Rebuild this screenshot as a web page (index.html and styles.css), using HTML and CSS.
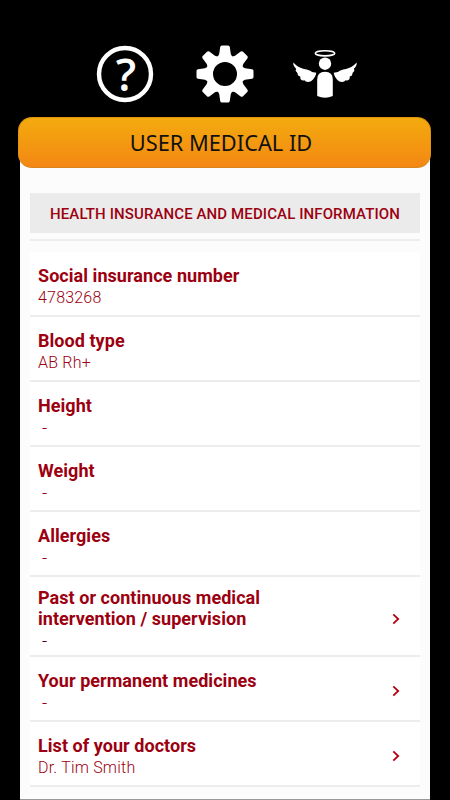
FILE: index.html
```html
<!DOCTYPE html>
<html lang="en">
    <head>
        <meta charset="utf-8">
        <title>User Medical ID</title>
        <link rel="stylesheet" href="styles.css">
    </head>
    <body>
        <nav class="top-menu">
            <svg class="icon" width="58" height="58" viewBox="0 0 58 58">
                <circle cx="29" cy="29" r="26" fill="none" stroke="#fff" stroke-width="4.4"/>
                <text class="help-mark" x="30" y="45.5" text-anchor="middle">?</text>
            </svg>
            <svg class="icon" width="58" height="58" viewBox="-29 -29 58 58" fill="#fff">
                <defs>
                    <path id="tooth" d="M-7.4 -17 L-5.8 -20 L-4.8 -27 Q-4.5 -28.5 -3 -28.5 H3 Q4.5 -28.5 4.8 -27 L5.8 -20 L7.4 -17 Z"/>
                </defs>
                <circle r="15.5" fill="none" stroke="#fff" stroke-width="7"/>
                <use href="#tooth"/>
                <use href="#tooth" transform="rotate(45)"/>
                <use href="#tooth" transform="rotate(90)"/>
                <use href="#tooth" transform="rotate(135)"/>
                <use href="#tooth" transform="rotate(180)"/>
                <use href="#tooth" transform="rotate(225)"/>
                <use href="#tooth" transform="rotate(270)"/>
                <use href="#tooth" transform="rotate(315)"/>
            </svg>
            <svg class="icon" width="66" height="58" viewBox="0 0 66 58" fill="#fff">
                <ellipse cx="33" cy="8.3" rx="9.7" ry="2.6" fill="none" stroke="#fff" stroke-width="1.6"/>
                <circle cx="33" cy="18.7" r="6.2"/>
                <path d="M25.2 34.5 Q25.2 26.8 33 26.8 Q40.8 26.8 40.8 34.5 V51 Q33 54.5 25.2 51 Z"/>
                <path id="wing" d="M1.3 17.5 Q6 22.5 12 24 Q18 25 20 27 L24.3 27.8 Q23.5 33 19 36.2 Q16 37.5 13.5 36.3 L12.5 35.2 Q9.5 36 8.5 34 L8.2 31.5 Q5.5 31 5.5 28 L3.7 26 L4 23.5 Q1 21 1.3 17.5 Z"/>
                <use href="#wing" transform="translate(66 0) scale(-1 1)"/>
            </svg>
        </nav>
        <header class="title-bar">USER MEDICAL ID</header>
        <main class="content">
            <h2 class="section-title">HEALTH INSURANCE AND MEDICAL INFORMATION</h2>
            <div class="separator"></div>
            <ul class="list">
                <li class="row">
                    <div>
                        <div class="campo">Social insurance number</div>
                        <div class="valor">4783268</div>
                    </div>
                </li>
                <li class="row">
                    <div>
                        <div class="campo">Blood type</div>
                        <div class="valor">AB Rh+</div>
                    </div>
                </li>
                <li class="row">
                    <div>
                        <div class="campo">Height</div>
                        <div class="valor empty">-</div>
                    </div>
                </li>
                <li class="row">
                    <div>
                        <div class="campo">Weight</div>
                        <div class="valor empty">-</div>
                    </div>
                </li>
                <li class="row">
                    <div>
                        <div class="campo">Allergies</div>
                        <div class="valor empty">-</div>
                    </div>
                </li>
                <li class="row row-tall">
                    <div>
                        <div class="campo">Past or continuous medical<br>intervention / supervision</div>
                        <div class="valor empty dark">-</div>
                    </div>
                    <svg class="arrow" width="8" height="12" viewBox="0 0 8 12"><path d="M1.3 1.3 L6.2 6 L1.3 10.7"/></svg>
                </li>
                <li class="row">
                    <div>
                        <div class="campo">Your permanent medicines</div>
                        <div class="valor empty">-</div>
                    </div>
                    <svg class="arrow" width="8" height="12" viewBox="0 0 8 12"><path d="M1.3 1.3 L6.2 6 L1.3 10.7"/></svg>
                </li>
                <li class="row">
                    <div>
                        <div class="campo">List of your doctors</div>
                        <div class="valor">Dr. Tim Smith</div>
                    </div>
                    <svg class="arrow" width="8" height="12" viewBox="0 0 8 12"><path d="M1.3 1.3 L6.2 6 L1.3 10.7"/></svg>
                </li>
            </ul>
        </main>
    </body>
</html>
```
FILE: styles.css
```css
* {
    box-sizing: border-box;
}
body {
    margin: 0;
    height: 800px;
    overflow: hidden;
    background-color: #000;
    display: flex;
    flex-direction: column;
    font-family: Roboto, sans-serif;
    color: #9c0010;
}

/** top icons **/
.top-menu {
    height: 117px;
    padding: 45px 0 0 96px;
    display: flex;
    gap: 42px;
}
.top-menu .icon {
    overflow: visible;
}
.top-menu .icon:last-child {
    margin-left: -4px;
}
.help-mark {
    font-family: "Open Sans", sans-serif;
    font-size: 45px;
    font-weight: 600;
    fill: #fff;
}

.title-bar {
    position: relative;
    flex: none;
    width: 413px;
    height: 51px;
    margin: 0 0 0 18px;
    padding-right: 7px;
    border: 1px solid #e2940f;
    border-bottom-color: #d9851c;
    border-radius: 14px;
    background: linear-gradient(#f3ab0e, #f48714);
    color: #111;
    font-family: "Noto Sans", sans-serif;
    font-size: 21.8px;
    line-height: 49px;
    text-align: center;
}

.content {
    flex: 1;
    width: 410px;
    margin: -26px 0 0 20px;
    padding: 51px 10px 0;
    background-color: #fcfcfc;
    border-bottom: 1px solid #999;
}
.section-title {
    margin: 0;
    height: 40px;
    background-color: #ebebeb;
    font-size: 15px;
    font-weight: 500;
    letter-spacing: 0.11px;
    line-height: 42px;
    text-align: center;
}
.separator {
    height: 2px;
    margin: 6px 0 11px;
    background-color: #eee;
}

.list {
    margin: 0;
    padding: 0;
    list-style: none;
}
.row {
    height: 65px;
    padding: 13px 20px 0 8px;
    display: flex;
    justify-content: space-between;
    background-color: #fff;
    border-bottom: 2px solid #ededed;
}
.row-tall {
    height: 80px;
    padding-top: 10px;
}
.campo {
    font-size: 18px;
    font-weight: 700;
    letter-spacing: 0.05px;
    line-height: 21px;
}
.valor {
    font-size: 16px;
    font-weight: 300;
    letter-spacing: 0.2px;
    line-height: 23px;
}
.empty {
    padding-left: 4px;
    font-size: 18px;
}
.dark {
    color: #5c0008;
}
.arrow {
    margin-top: 15px;
    fill: none;
    stroke: #b30012;
    stroke-width: 1.8;
}
.row-tall .arrow {
    margin-top: 26px;
}
```
